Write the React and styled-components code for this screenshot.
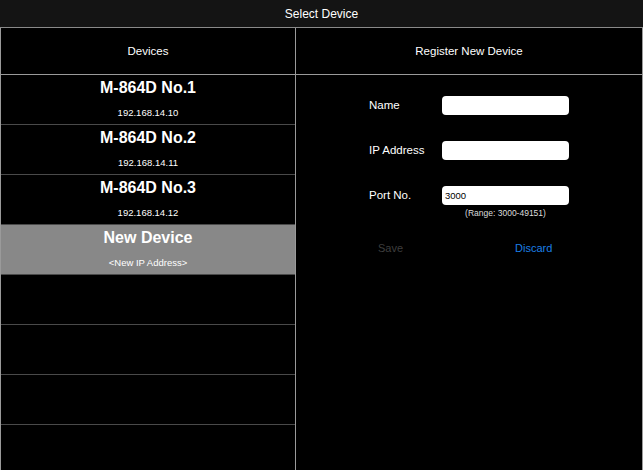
import styled, { createGlobalStyle } from 'styled-components';

const GlobalStyle = createGlobalStyle`
  html, body {
    margin: 0;
    padding: 0;
    background: #000;
  }
  body {
    font-family: "Liberation Sans", Arial, sans-serif;
    color: #fff;
  }
`;

const devices = [
  { name: 'M-864D No.1', ip: '192.168.14.10' },
  { name: 'M-864D No.2', ip: '192.168.14.11' },
  { name: 'M-864D No.3', ip: '192.168.14.12' },
  { name: 'New Device', ip: '<New IP Address>', selected: true },
];

const emptyRows = [0, 1, 2, 3];

const App = () => {
  return (
    <>
      <GlobalStyle />
      <Screen>
        <TopBar>Select Device</TopBar>
        <Panels>
          <LeftPanel>
            <PanelHeader>Devices</PanelHeader>
            {devices.map((d) => (
              <DeviceRow key={d.name} selected={d.selected}>
                <DeviceName>{d.name}</DeviceName>
                <DeviceIp>{d.ip}</DeviceIp>
              </DeviceRow>
            ))}
            {emptyRows.map((i) => (
              <DeviceRow key={i} />
            ))}
          </LeftPanel>
          <RightPanel>
            <PanelHeader>Register New Device</PanelHeader>
            <Form>
              <FieldRow>
                <Label>Name</Label>
                <Field />
              </FieldRow>
              <FieldRow>
                <Label>IP Address</Label>
                <Field />
              </FieldRow>
              <FieldRow>
                <Label>Port No.</Label>
                <FieldColumn>
                  <Field>3000</Field>
                  <Hint>(Range: 3000-49151)</Hint>
                </FieldColumn>
              </FieldRow>
              <Buttons>
                <ActionButton>Save</ActionButton>
                <ActionButton primary>Discard</ActionButton>
              </Buttons>
            </Form>
          </RightPanel>
        </Panels>
      </Screen>
    </>
  );
};

const Screen = styled.div`
  width: 643px;
  height: 470px;
  display: flex;
  flex-direction: column;
  background: #000;
  overflow: hidden;
`;

const TopBar = styled.div`
  height: 27px;
  flex: none;
  background: #141414;
  border-bottom: 1px solid #8a8a8a;
  display: flex;
  align-items: center;
  justify-content: center;
  font-size: 12px;
  color: #fff;
`;

const Panels = styled.div`
  flex: 1;
  display: flex;
  border-left: 1px solid #9a9a9a;
  border-right: 1px solid #9a9a9a;
  border-bottom: 1px solid #9a9a9a;
`;

const LeftPanel = styled.div`
  width: 294px;
  flex: none;
  border-right: 1px solid #9a9a9a;
  display: flex;
  flex-direction: column;
  overflow: hidden;
`;

const RightPanel = styled.div`
  flex: 1;
  display: flex;
  flex-direction: column;
`;

const PanelHeader = styled.div`
  height: 46px;
  flex: none;
  border-bottom: 1px solid #9a9a9a;
  display: flex;
  align-items: center;
  justify-content: center;
  font-size: 11.5px;
  color: #fff;
`;

const DeviceRow = styled.div`
  height: 50px;
  flex: none;
  box-sizing: border-box;
  border-bottom: 1px solid #4a4a4a;
  background: ${(p) => (p.selected ? '#888888' : '#000')};
  display: flex;
  flex-direction: column;
  align-items: center;
  padding-top: 3px;
`;

const DeviceName = styled.div`
  font-size: 16px;
  font-weight: bold;
  line-height: 20px;
`;

const DeviceIp = styled.div`
  font-size: 9.5px;
  margin-top: 9px;
  line-height: 12px;
`;

const Form = styled.div`
  display: flex;
  flex-direction: column;
  padding: 21px 0 0 73px;
`;

const FieldRow = styled.div`
  display: flex;
  align-items: flex-start;
  height: 45px;
`;

const Label = styled.div`
  width: 73px;
  font-size: 11.5px;
  line-height: 18px;
`;

const FieldColumn = styled.div`
  display: flex;
  flex-direction: column;
  align-items: center;
`;

const Field = styled.div`
  width: 127px;
  height: 19px;
  background: #fff;
  border-radius: 4px;
  color: #000;
  font-size: 9.5px;
  line-height: 19px;
  padding-left: 3px;
  box-sizing: border-box;
`;

const Hint = styled.div`
  font-size: 8.5px;
  margin-top: 3px;
  color: #ddd;
`;

const Buttons = styled.div`
  display: flex;
  margin-top: 11px;
  padding-left: 9px;
  gap: 112px;
`;

const ActionButton = styled.div`
  font-size: 11px;
  color: ${(p) => (p.primary ? '#1b7fe6' : '#3e3e3e')};
`;

export default App;
